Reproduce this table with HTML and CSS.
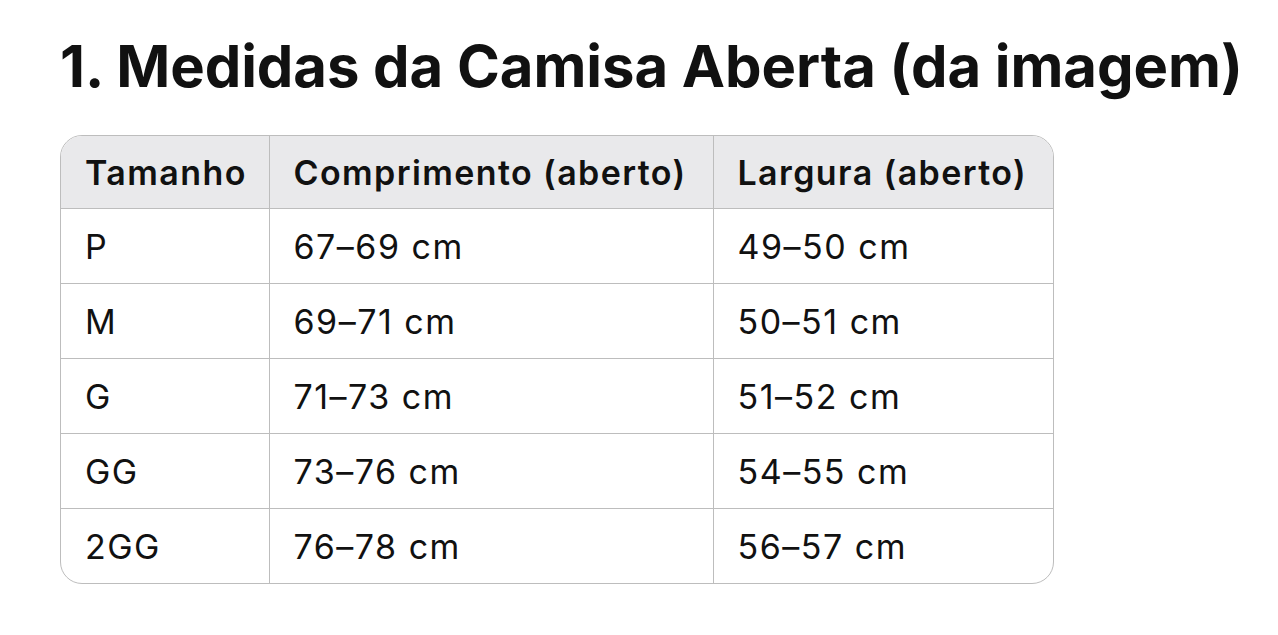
FILE: index.html
```html
<!DOCTYPE html>
<html lang="pt">
<head>
<meta charset="utf-8">
<title>Medidas da Camisa Aberta</title>
<link rel="stylesheet" href="styles.css">
</head>
<body>
<main class="page">
  <h1 class="title">1. Medidas da Camisa Aberta (da imagem)</h1>
  <div class="table-wrap">
    <table class="sizes">
      <colgroup>
        <col class="c1"><col class="c2"><col class="c3">
      </colgroup>
      <thead>
        <tr><th>Tamanho</th><th>Comprimento (aberto)</th><th>Largura (aberto)</th></tr>
      </thead>
      <tbody>
        <tr><td>P</td><td>67–69 cm</td><td>49–50 cm</td></tr>
        <tr><td>M</td><td>69–71 cm</td><td>50–51 cm</td></tr>
        <tr><td>G</td><td>71–73 cm</td><td>51–52 cm</td></tr>
        <tr><td>GG</td><td>73–76 cm</td><td>54–55 cm</td></tr>
        <tr><td>2GG</td><td>76–78 cm</td><td>56–57 cm</td></tr>
      </tbody>
    </table>
  </div>
</main>
</body>
</html>
```
FILE: styles.css
```css
html, body {
  margin: 0;
  padding: 0;
  background: #ffffff;
}
body {
  font-family: Inter, "Noto Sans", "Liberation Sans", sans-serif;
  color: #111111;
}
.page {
  padding: 30px 0 0 60px;
}
.title {
  margin: 0;
  font-size: 58px;
  font-weight: 700;
  line-height: 72px;
  letter-spacing: -0.05px;
}
.table-wrap {
  margin-top: 33px;
  width: 992px;
  border: 1px solid #bdbdbd;
  border-radius: 22px;
  overflow: hidden;
}
.sizes {
  width: 100%;
  border-collapse: collapse;
  table-layout: fixed;
}
.c1 { width: 208px; }
.c2 { width: 444px; }
.c3 { width: auto; }
.sizes th, .sizes td {
  text-align: left;
  padding: 0 0 0 24px;
  font-size: 34px;
  letter-spacing: 1.5px;
  border-right: 1px solid #bdbdbd;
  border-bottom: 1px solid #bdbdbd;
}
.sizes th:last-child, .sizes td:last-child { border-right: none; }
.sizes tbody tr:last-child td { border-bottom: none; }
.sizes th {
  height: 72px;
  background: #e9e9eb;
  font-weight: 600;
  letter-spacing: 1.4px;
}
.sizes td {
  height: 74px;
  font-weight: 400;
}
```
